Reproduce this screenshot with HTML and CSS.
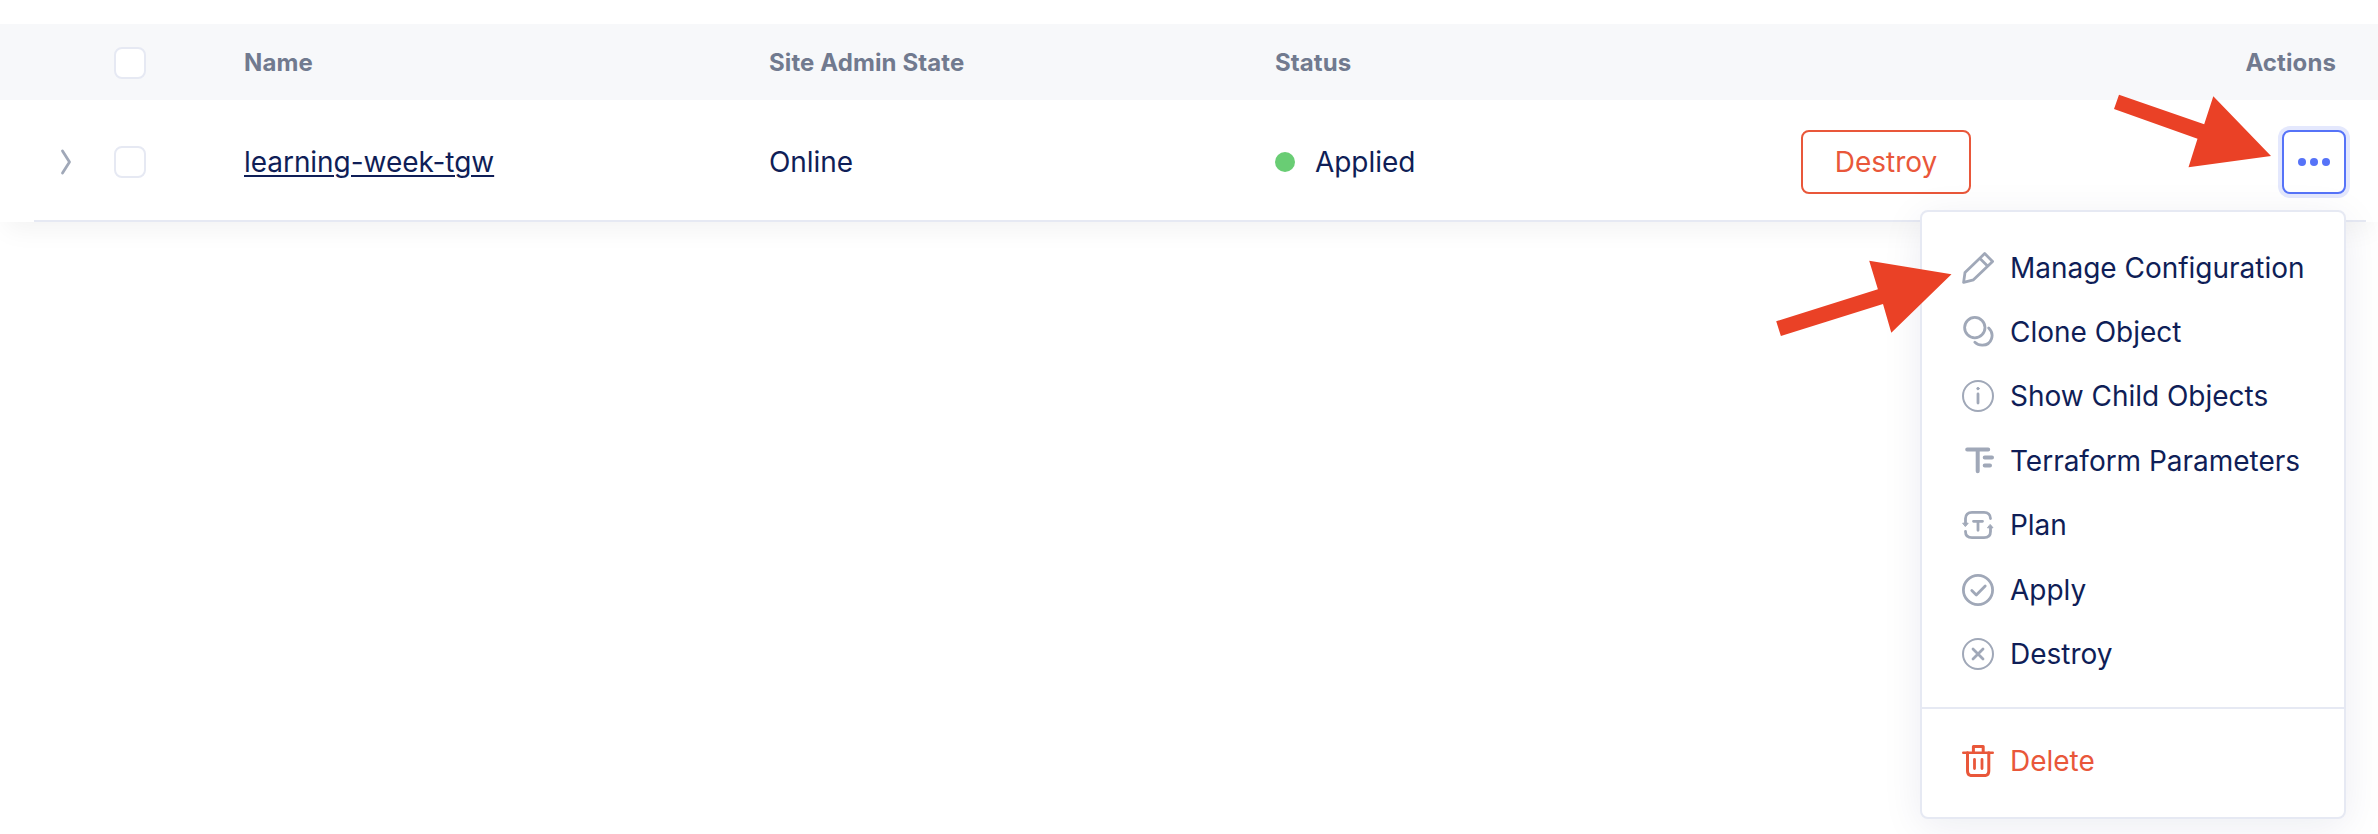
FILE: index.html
```html
<!DOCTYPE html>
<html lang="en">
<head>
<meta charset="utf-8">
<title>Sites</title>
<link rel="stylesheet" href="styles.css">
</head>
<body>
<main class="page">
  <section class="table">
    <div class="row row-head">
      <span></span>
      <span class="checkbox"></span>
      <span class="th">Name</span>
      <span class="th">Site Admin State</span>
      <span class="th">Status</span>
      <span></span>
      <span class="th th-actions">Actions</span>
    </div>
    <div class="row row-body">
      <svg class="chevron" viewBox="0 0 14 28"><path d="M2.5 3L9.5 14L2.5 25"/></svg>
      <span class="checkbox"></span>
      <a class="name">learning-week-tgw</a>
      <span class="cell">Online</span>
      <span class="status"><i class="dot"></i><span class="cell">Applied</span></span>
      <button class="destroy">Destroy</button>
      <div class="actions">
        <button class="more"><i></i><i></i><i></i></button>
        <div class="menu">
          <div class="group group-main">
            <div class="item"><svg class="icon" viewBox="0 0 32 32"><path d="M1.6 30.4L3 20.5L22.7 1.6L30.6 9.4L11.5 27.8Z M18 6.5L25.5 14"/></svg><span>Manage Configuration</span></div>
            <div class="item"><svg class="icon" viewBox="0 0 32 32"><circle cx="12.8" cy="11.6" r="10.2"/><path d="M26.7 11.9C33 18 30 28.9 20.5 29.2C17.3 29.3 14.8 28.1 12.9 26.3"/></svg><span>Clone Object</span></div>
            <div class="item"><svg class="icon" viewBox="0 0 32 32"><circle class="thin" cx="16" cy="16" r="15"/><path d="M16 14V23"/><circle class="fill" cx="16" cy="8.6" r="1.2"/></svg><span>Show Child Objects</span></div>
            <div class="item"><svg class="icon" viewBox="0 0 32 32"><path class="heavy" d="M5.2 4.5H26.2M15.7 4.5V26.3M22.7 12.5H30M22.7 20.5H28"/></svg><span>Terraform Parameters</span></div>
            <div class="item"><svg class="icon" viewBox="0 0 32 32"><path d="M28.5 9.5C28.5 5.5 26 3.3 22 3.3H10C6 3.3 3.5 5.5 3.5 9.5V14M3.5 22.5C3.5 26.5 6 28.7 10 28.7H22C26 28.7 28.5 26.5 28.5 22.5V18.5"/><path class="fill" d="M1 14.2H6.2L3.6 17.3Z M25.8 18.8H31L28.4 15.7Z"/><path d="M11.5 12.3H20.5M16 12.3V21.3"/></svg><span>Plan</span></div>
            <div class="item"><svg class="icon" viewBox="0 0 32 32"><circle cx="16" cy="16" r="14.6"/><path d="M9.8 16.5L14.3 21L23.2 12"/></svg><span>Apply</span></div>
            <div class="item"><svg class="icon" viewBox="0 0 32 32"><circle class="thin" cx="16" cy="16" r="15"/><path d="M11 11L21 21M21 11L11 21"/></svg><span>Destroy</span></div>
          </div>
          <div class="group group-danger">
            <div class="item danger"><svg class="icon" viewBox="0 0 32 32"><path class="lid" d="M1.2 7.7H30.8"/><path class="bin" d="M11.4 7.5V1.5H21.2V7.5M5.5 7.7V26C5.5 29 7 30.6 10 30.6H22.3C25.3 30.6 26.8 29 26.8 26V7.7"/><path d="M12.5 14.5V23.5M20 14.5V23.5"/></svg><span>Delete</span></div>
          </div>
        </div>
      </div>
    </div>
  </section>
  <svg class="pointers" viewBox="0 0 2378 834">
    <path d="M2119 94.7L2204.2 124.3L2213.3 96.3L2271 156L2188.5 167.3L2197.5 138.7L2114 109Z"/>
    <path d="M1776.2 321.3L1877.9 289.3L1869.2 260.7L1951.5 274.3L1891.3 332.7L1883 304L1780.9 336Z"/>
  </svg>
</main>
</body>
</html>
```
FILE: styles.css
```css
* { box-sizing: border-box; }
body { margin: 0; background: #fff; font-family: Inter, "Liberation Sans", sans-serif; color: #0f1e57; }
.page { position: relative; width: 2378px; height: 834px; padding-top: 24px; overflow: hidden; }
.table { height: 198px; background: #fff; box-shadow: 0 14px 24px -6px rgba(0,0,0,.05); }
.row {
  display: grid;
  grid-template-columns: 54px 130px 525px 506px 526px 1fr auto;
  align-items: center;
  padding-left: 60px;
}
.row-head { height: 76px; padding-top: 2px; background: #f7f8fa; }
.row-body { height: 122px; margin: 0 12px 0 34px; padding-left: 26px; padding-top: 4px; border-bottom: 2px solid #e6e9f3; }
.th { font-size: 24px; font-weight: 700; line-height: 30px; letter-spacing: .1px; color: #717a8f; white-space: nowrap; }
.th-actions { padding-right: 42px; }
.checkbox { width: 32px; height: 32px; border: 2px solid #e6e9f3; border-radius: 8px; background: #fff; }
.chevron { width: 14px; height: 28px; fill: none; stroke: #a0a8b8; stroke-width: 2.8; stroke-linecap: round; stroke-linejoin: round; }
.name, .cell { font-size: 28px; line-height: 34px; letter-spacing: -.05px; white-space: nowrap; }
.name { text-decoration: underline; text-decoration-thickness: 2px; text-underline-offset: 3px; }
.status { display: flex; align-items: center; gap: 20px; }
.dot { width: 20px; height: 20px; border-radius: 50%; background: #69cd74; }
.destroy {
  width: 170px; height: 64px; padding: 0;
  border: 2px solid #e9573a; border-radius: 8px; background: #fff;
  color: #e9573a; font: 400 28px/34px Inter, "Liberation Sans", sans-serif;
}
.actions { position: relative; padding-right: 20px; }
.more {
  display: flex; align-items: center; justify-content: center; gap: 4px;
  width: 64px; height: 64px; padding: 0;
  border: 2px solid #5673f8; border-radius: 8px; background: #fff; box-shadow: 0 0 0 4px #e4e8fd;
}
.more i { width: 8px; height: 8px; border-radius: 50%; background: #5673f8; }
.menu {
  position: absolute; top: 80px; right: 20px; width: 426px; height: 609px;
  border: 2px solid #e6e9f3; border-radius: 8px; background: #fff;
  box-shadow: 0 8px 40px rgba(15,30,87,.08);
}
.group { padding-left: 40px; }
.group-main { height: 497px; padding-top: 23.5px; border-bottom: 2px solid #e6e9f3; }
.group-danger { padding-top: 19.75px; }
.item { display: flex; align-items: center; gap: 16px; height: 64.4px; font-size: 28px; line-height: 34px; letter-spacing: -.02px; white-space: nowrap; color: #0f1e57; }
.icon { width: 32px; height: 32px; fill: none; stroke: #a0a8b8; stroke-width: 2.8; stroke-linecap: round; stroke-linejoin: round; }
.icon .thin { stroke-width: 2; }
.icon .heavy { stroke-width: 4; }
.icon .fill { fill: #a0a8b8; stroke-width: 1; }
.item.danger { color: #e9573a; }
.danger .icon { stroke: #e9573a; }
.danger .lid { stroke-width: 2.4; }
.danger .bin { stroke-width: 3; }
.pointers { position: absolute; left: 0; top: 0; width: 2378px; height: 834px; fill: #ea4126; pointer-events: none; }
```
